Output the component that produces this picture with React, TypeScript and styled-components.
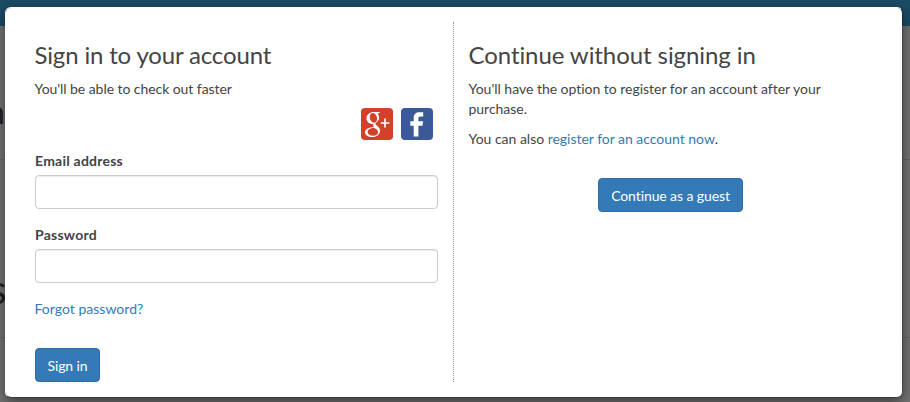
import React from 'react';
import styled, { createGlobalStyle } from 'styled-components';

const GlobalStyle = createGlobalStyle`
  *, *::before, *::after { box-sizing: border-box; }
  body {
    margin: 0;
    overflow: hidden;
    color: #444;
    font: 14px/20px Lato, sans-serif;
    font-variant-ligatures: none;
  }
`;

const Page = styled.div`
  position: relative;
  height: 402px;
  overflow: hidden;
  background: #757575;
`;

const SiteHeader = styled.div`
  height: 26px;
  background: #1b4c66;
`;

const SiteRow = styled.div<{ $height: number }>`
  display: flex;
  align-items: flex-end;
  height: ${(p) => p.$height}px;
  border-bottom: 1px solid #686868;
`;

const SiteText = styled.span<{ $shift: number; $lift: number; $size: number }>`
  margin: 0 0 ${(p) => p.$lift}px ${(p) => p.$shift}px;
  color: #222;
  font-size: ${(p) => p.$size}px;
  line-height: 1;
`;

const Dialog = styled.main`
  position: absolute;
  top: 7px;
  left: 5px;
  display: grid;
  grid-template-columns: 448px 1fr;
  width: 898px;
  height: 391px;
  padding: 14px 0 15px;
  border: 1px solid rgba(0, 0, 0, 0.2);
  border-left-color: #fff;
  border-top-color: #fff;
  border-radius: 6px;
  background: #fff;
  background-clip: padding-box;
  box-shadow: 0 5px 15px rgba(0, 0, 0, 0.5);
`;

const Panel = styled.section<{ $divided?: boolean }>`
  display: flex;
  flex-direction: column;
  align-items: stretch;
  padding: 20px ${(p) => (p.$divided ? 15 : 28)}px 0 ${(p) => (p.$divided ? 29 : 15)}px;
  border-right: ${(p) => (p.$divided ? '1px dotted #999' : '0')};
  letter-spacing: ${(p) => (p.$divided ? -0.06 : -0.02)}px;
`;

const Title = styled.h3<{ $tracking: number }>`
  margin: 0 0 11px -0.5px;
  font-size: 24px;
  font-weight: 400;
  line-height: 26px;
  letter-spacing: ${(p) => p.$tracking}px;
`;

const Text = styled.p`
  margin: 0 0 10px -0.5px;
`;

const Socials = styled.div`
  display: flex;
  justify-content: flex-end;
  gap: 8px;
  height: 32px;
  margin: -1px 5px 11px 0;
`;

const SocialButton = styled.button<{ $color: string }>`
  width: 32px;
  height: 32px;
  padding: 0;
  border: 0;
  border-radius: 4px;
  background: ${(p) => p.$color};
  overflow: hidden;

  svg { display: block; }
`;

const Field = styled.label`
  display: flex;
  flex-direction: column;
  gap: 4px;
  margin-bottom: 16px;
  font-weight: 700;
  letter-spacing: 0.23px;
`;

const Input = styled.input`
  width: 100%;
  height: 34px;
  padding: 6px 12px;
  border: 1px solid #ccc;
  border-radius: 4px;
  background: #fff;
  box-shadow: inset 0 1px 1px rgba(0, 0, 0, 0.075);
`;

const Link = styled.a`
  color: #337ab7;
  text-decoration: none;
`;

const ForgotRow = styled.div`
  margin-left: -0.5px;
  letter-spacing: 0.02px;
`;

const Button = styled.button<{ $center?: boolean }>`
  align-self: ${(p) => (p.$center ? 'center' : 'flex-start')};
  width: ${(p) => (p.$center ? 145 : 65)}px;
  height: 34px;
  margin-top: ${(p) => (p.$center ? 19 : 29)}px;
  margin-right: ${(p) => (p.$center ? 2 : 0)}px;
  padding: 1px 0 0;
  border: 1px solid #2e6da4;
  border-radius: 4px;
  background: #337ab7;
  color: #fff;
  font: inherit;
  font-variant-ligatures: none;
  letter-spacing: -0.1px;
  white-space: nowrap;
`;

const GoogleIcon = () => (
  <svg width="32" height="32" viewBox="0 0 32 32" fill="none">
    <path
      fill="#fff"
      fillRule="evenodd"
      d="M19.2 4h-6.6C8.8 4 5.500 6.700 5.500 10.200c0 3.400 2.600 5.800 6.200 5.800l.7-.1c-.5 1.200-.3 2 .6 3-4.800.1-9 2.100-9 5.400 0 3.100 3.100 4.700 7.100 4.700 4.800 0 7.900-2.700 7.900-6 0-2.500-1.100-3.900-3.200-5.500-1.700-1.300-1.900-1.900.1-3.500 1.300-1.100 2.200-2.400 2.200-4.400 0-1.900-.7-3.300-1.900-4.300h1.600zM12 4.900c2 0 3.700 2.200 4 5.100.3 2.700-.8 4.800-3 4.800-2.100 0-3.900-2.200-4.200-5C8.500 7 9.800 4.900 12 4.900zm1.500 15.200c2.100 1.400 3.600 2.100 3.600 4.200 0 2.200-1.800 3.500-5 3.500-3.300 0-5.400-1.600-5.400-3.900 0-2.400 3.100-4 6.800-3.800z"
    />
    <path d="M24 10.500v9M19.700 15h8.700" stroke="#fff" strokeWidth="1.700" />
  </svg>
);

const FacebookIcon = () => (
  <svg width="32" height="32" viewBox="0 0 32 32">
    <path
      fill="#fff"
      d="M22.200 4.300v4.200h-2.500c-2 0-2.300.9-2.300 2.300v2.500h4.700l-.6 4.500h-4.100v10.700h-4.700V17.800H9.300v-4.500h3.400V9.900c0-3.800 2.200-5.700 5.700-5.700 1.700 0 3.100.1 3.800.1z"
    />
  </svg>
);

export default function App() {
  return (
    <>
      <GlobalStyle />
      <Page>
        <SiteHeader />
        <SiteRow $height={134}>
          <SiteText $shift={-13} $lift={31} $size={32}>n</SiteText>
        </SiteRow>
        <SiteRow $height={178}>
          <SiteText $shift={-11} $lift={28} $size={41}>s</SiteText>
        </SiteRow>
        <Dialog>
          <Panel $divided>
            <Title $tracking={-0.16}>Sign in to your account</Title>
            <Text>You'll be able to check out faster</Text>
            <Socials>
              <SocialButton $color="#d3412b" aria-label="Google+"><GoogleIcon /></SocialButton>
              <SocialButton $color="#3b5998" aria-label="Facebook"><FacebookIcon /></SocialButton>
            </Socials>
            <Field>Email address<Input type="email" /></Field>
            <Field>Password<Input type="password" /></Field>
            <ForgotRow><Link>Forgot password?</Link></ForgotRow>
            <Button>Sign in</Button>
          </Panel>
          <Panel>
            <Title $tracking={-0.08}>Continue without signing in</Title>
            <Text>You'll have the option to register for an account after your purchase.</Text>
            <Text>You can also <Link>register for an account now</Link>.</Text>
            <Button $center>Continue as a guest</Button>
          </Panel>
        </Dialog>
      </Page>
    </>
  );
}
